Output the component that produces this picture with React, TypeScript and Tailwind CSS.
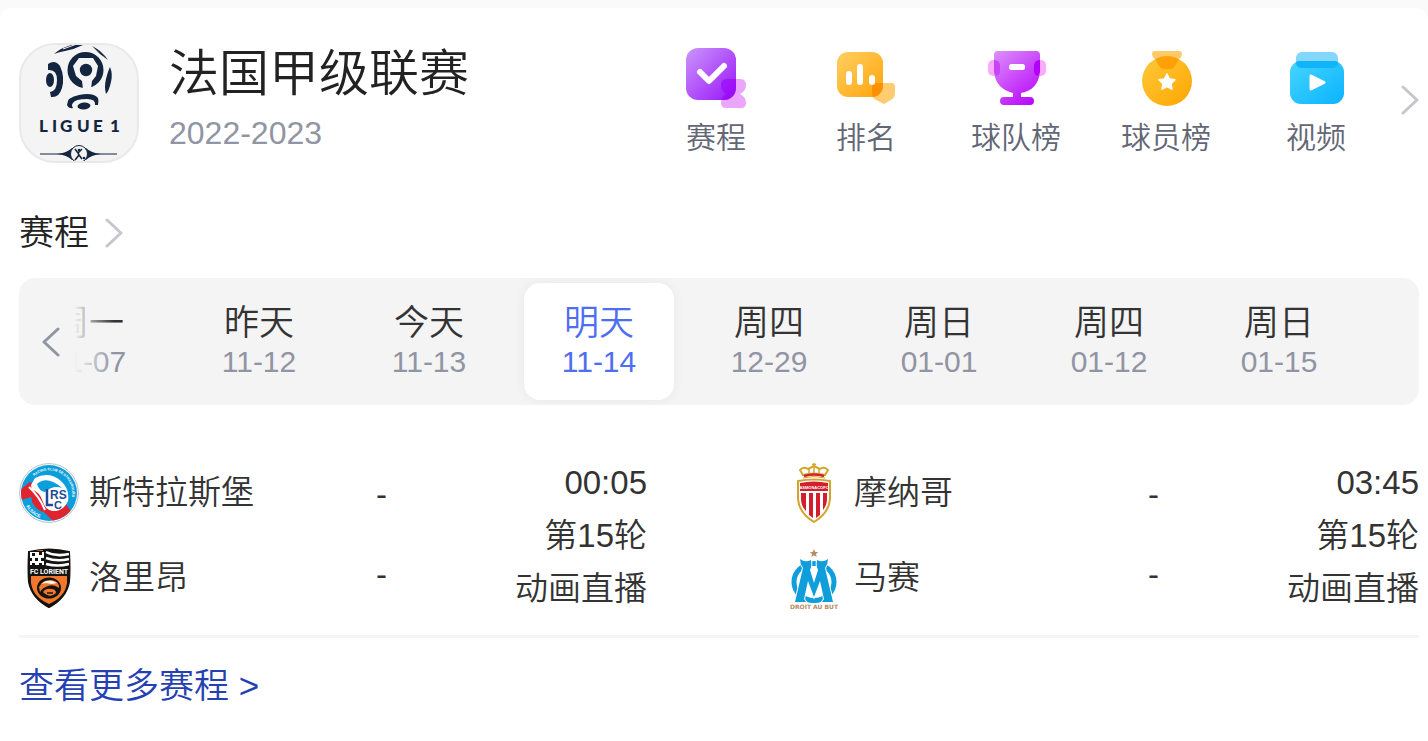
import { ReactNode } from "react";
import clsx from "clsx";

const Chevron = ({ className, flip = false }: { className?: string; flip?: boolean }) => (
  <svg viewBox="0 0 18 30" className={clsx("h-[30px] w-[18px]", className)} fill="none" aria-hidden="true">
    <path
      d={flip ? "M16 2 2 15 16 28" : "M2 2 16 15 2 28"}
      stroke="currentColor"
      strokeWidth="3"
      strokeLinecap="round"
      strokeLinejoin="round"
    />
  </svg>
);

const LeagueLogo = () => (
  <svg viewBox="2 2 116 116" className="size-full overflow-visible" fill="#14263f" role="img" aria-label="Ligue 1">
    <path d="M35 11Q45 2 63 0L64 2Q56 6 46 8Q40 9 35 11Z" />
    <path d="M44 6 58 1" stroke="#f4f4f4" strokeWidth="1" />
    <path d="M73 3Q83 8 89 17Q80 11 73 3Z" />
    <circle cx="66.500" cy="27" r="18" />
    <path d="M60 15 74 15 79 23 77 33 73 38 72 46 64 46 63 38 57 33 54 23Z" fill="#f4f4f4" />
    <circle cx="67" cy="27" r="6.200" />
    <path d="M29 21Q36 16 41 23Q46 34 43 45Q40 55 32 54L31 49Q38 48 38 37Q38 26 29 27Z" />
    <ellipse cx="31" cy="37" rx="4" ry="7" />
    <path d="M91 24Q94 31 92 39Q90 48 87 51Q85 44 87 36Q89 28 91 24Z" />
    <path d="M48 62Q48 54 60 52Q74 49 79 55Q80 58 79 62L76 62Q77 56 68 56Q56 56 54 60Q52 62 54 65Q50 66 48 62Z" />
    <ellipse cx="65" cy="63" rx="6.500" ry="3.400" transform="rotate(-6 65 63)" />
    <text x="20 33 41 58 74 85 91" y="89" fontSize="17" fontWeight="900" fontFamily="Lato, sans-serif">
      LIGUE 1
    </text>
    <path d="M21 111H98" stroke="#14263f" strokeWidth="1" />
    <path d="M38 111Q48 110 53 105H67Q72 110 82 111Q72 112 67 117H53Q48 112 38 111Z" />
    <circle cx="60" cy="111" r="8.500" fill="#f4f4f4" stroke="#14263f" />
    <path d="M56 106 59 110 63 106M59 109 60 113M60 112 56 117M60 112 63 116" stroke="#14263f" strokeWidth="1.600" fill="none" />
    <circle cx="60" cy="107" r="1.300" />
    <circle cx="65" cy="115" r="1.300" />
  </svg>
);

const ScheduleIcon = () => (
  <svg viewBox="0 0 60 60" className="size-[60px]" aria-hidden="true">
    <defs>
      <linearGradient id="schedule" x1="0" y1="0" x2="1" y2="1">
        <stop stopColor="#cb96fb" />
        <stop offset="1" stopColor="#9914f8" />
      </linearGradient>
      <clipPath id="schedule-clip">
        <rect width="50" height="52" rx="12" />
      </clipPath>
    </defs>
    <path d="M41 31h13q6 0 6 6t-6 9q6 3 6 9 0 5-5 5H40q-5 0-5-5 0-6 5-9-5-3-5-9 0-6 6-6Z" fill="#eba5fb" />
    <rect width="50" height="52" rx="12" fill="url(#schedule)" />
    <path
      d="M41 31h13q6 0 6 6t-6 9q6 3 6 9 0 5-5 5H40q-5 0-5-5 0-6 5-9-5-3-5-9 0-6 6-6Z"
      fill="#9b00f8"
      opacity=".6"
      clipPath="url(#schedule-clip)"
    />
    <path d="M14 24 23 33 38 18" fill="none" stroke="#fff" strokeWidth="6" strokeLinecap="round" strokeLinejoin="round" />
  </svg>
);

const RankIcon = () => (
  <svg viewBox="0 0 60 60" className="size-[60px]" aria-hidden="true">
    <defs>
      <linearGradient id="rank" x1="0" y1="0" x2="1" y2="1">
        <stop stopColor="#ffcf62" />
        <stop offset="1" stopColor="#ffa50a" />
      </linearGradient>
      <clipPath id="rank-clip">
        <rect x="1" y="4" width="46" height="45" rx="11" />
      </clipPath>
    </defs>
    <path d="M39 35H56q3 0 3 4v6q0 5-4 7l-7 4-8-4q-4-2-4-7v-7q0-3 3-3Z" fill="#ffcd70" />
    <rect x="1" y="4" width="46" height="45" rx="11" fill="url(#rank)" />
    <path
      d="M39 35H56q3 0 3 4v6q0 5-4 7l-7 4-8-4q-4-2-4-7v-7q0-3 3-3Z"
      fill="#ff8a00"
      opacity=".8"
      clipPath="url(#rank-clip)"
    />
    <path d="M13 26v8M24 19v15M36 30v4" stroke="#fff" strokeWidth="6" strokeLinecap="round" />
  </svg>
);

const TrophyIcon = () => (
  <svg viewBox="0 0 60 60" className="size-[60px]" aria-hidden="true">
    <defs>
      <linearGradient id="trophy" gradientUnits="userSpaceOnUse" x1="8" y1="3" x2="52" y2="56">
        <stop stopColor="#dc90fb" />
        <stop offset="1" stopColor="#b800fa" />
      </linearGradient>
    </defs>
    <rect x="2" y="12" width="12" height="16" rx="5" fill="#fbabfb" />
    <rect x="48" y="12" width="12" height="16" rx="5" fill="#fbabfb" />
    <path
      d="M12 3H50q4 0 4 4V24Q52 42 35 45v4h9q4 0 4 4t-4 4H18q-4 0-4-4t4-4h9V45Q10 41 8 24V7q0-4 4-4Z"
      fill="url(#trophy)"
    />
    <path d="M8 12q6 0 6 6v5q0 4-4 5l-2-4Z" fill="#c743f4" />
    <path d="M54 12q-6 0-6 6v5q0 4 4 5l2-4Z" fill="#b100f5" />
    <rect x="23" y="16" width="16" height="6" rx="2.500" fill="#fff" />
  </svg>
);

const MedalIcon = () => (
  <svg viewBox="0 0 60 60" className="size-[60px]" aria-hidden="true">
    <defs>
      <linearGradient id="medal" x1="0" y1="0" x2="1" y2="1">
        <stop stopColor="#ffc93c" />
        <stop offset="1" stopColor="#ffa600" />
      </linearGradient>
      <clipPath id="medal-clip">
        <circle cx="31" cy="33" r="25" />
      </clipPath>
    </defs>
    <path d="M19 3H43q3 0 3 3 0 3-3 5l-4 7q-2 3-4 3h-8q-2 0-4-3l-4-7q-3-2-3-5 0-3 3-3Z" fill="#ffcb69" />
    <circle cx="31" cy="33" r="25" fill="url(#medal)" />
    <path
      d="M19 3H43q3 0 3 3 0 3-3 5l-4 7q-2 3-4 3h-8q-2 0-4-3l-4-7q-3-2-3-5 0-3 3-3Z"
      fill="#ff9800"
      opacity=".8"
      clipPath="url(#medal-clip)"
    />
    <path
      d="m31 26 2.500 5 5.500.8-4 3.900 1 5.500-5-2.600-5 2.600 1-5.500-4-3.900 5.500-.8Z"
      fill="#fff"
      stroke="#fff"
      strokeWidth="1.500"
      strokeLinejoin="round"
    />
  </svg>
);

const VideoIcon = () => (
  <svg viewBox="0 0 60 60" className="size-[60px]" aria-hidden="true">
    <defs>
      <linearGradient id="video" x1="0" y1="0" x2="1" y2="1">
        <stop stopColor="#46d5fe" />
        <stop offset="1" stopColor="#0ab3ff" />
      </linearGradient>
    </defs>
    <rect x="10" y="4" width="42" height="16" rx="6" fill="#82d7fb" />
    <rect x="4" y="13" width="54" height="43" rx="11" fill="url(#video)" />
    <path d="M10 14q2-1 4-1H48q2 0 4 1v0q0 6-6 6H16q-6 0-6-6Z" fill="#10b4f8" />
    <path d="M25 28v13l13-6.500Z" fill="#fff" stroke="#fff" strokeWidth="3" strokeLinejoin="round" />
  </svg>
);

const StrasbourgLogo = () => (
  <svg viewBox="0 0 60 60" className="size-[60px]" aria-hidden="true">
    <defs>
      <clipPath id="rcs-clip">
        <circle cx="30" cy="30" r="28" />
      </clipPath>
      <path id="rcs-top" d="M15 13A23 23 0 0 1 51 40" />
      <path id="rcs-bottom" d="M7 43Q13 53 24 56" />
    </defs>
    <circle cx="30" cy="30" r="29.400" fill="#fff" stroke="#9db3c0" strokeWidth=".8" />
    <circle cx="30" cy="30" r="28" fill="#0c9ddb" />
    <g clipPath="url(#rcs-clip)">
      <path d="M11 19 0 28v10l12-4 12 14 12 12h8L52 48 46 40Z" fill="#e0242f" />
      <path d="M16 15Q30 8 42 18 51 26 49 38 44 49 33 48 22 46 20 36 12 30 12 22Z" fill="#fff" />
      <path d="M18 21Q28 12 43 25 34 22 26 29 20 28 18 21Z" fill="#0c9ddb" />
      <path d="M12 26Q21 29 24 39 26 46 34 49 20 52 13 39Z" fill="#e0242f" />
      <path d="M10 24Q20 33 26 47" fill="none" stroke="#fff" strokeWidth="2" />
      <path d="M28 26V42H34" fill="none" stroke="#1e4b95" strokeWidth="2.500" />
    </g>
    <g fill="#1e4b95" fontFamily="Liberation Sans, sans-serif" fontWeight="700">
      <text x="31" y="36" fontSize="12">
        RS
      </text>
      <text x="35" y="46" fontSize="11">
        C
      </text>
    </g>
    <g fill="#fff" fontFamily="Liberation Sans, sans-serif" fontWeight="700" fontSize="3.500">
      <text>
        <textPath href="#rcs-top">RACING CLUB DE STRASBOURG</textPath>
      </text>
      <text fontSize="4.500">
        <textPath href="#rcs-bottom">ALSACE</textPath>
      </text>
    </g>
  </svg>
);

const LorientLogo = () => (
  <svg viewBox="0 0 60 60" className="size-[60px]" aria-hidden="true">
    <defs>
      <clipPath id="fcl-clip">
        <path d="M10 4Q30-1 50 4 51 22 50 34 47 50 30 59 13 50 10 34 9 22 10 4Z" />
      </clipPath>
    </defs>
    <path d="M10 4Q30-1 50 4 51 22 50 34 47 50 30 59 13 50 10 34 9 22 10 4Z" fill="#151311" stroke="#151311" strokeWidth="2" />
    <g clipPath="url(#fcl-clip)">
      <path d="M11 4h14v13H11Z" fill="#fff" />
      <path d="M13 5h3v3h-3zM20 4h3v3h-3zM11 10h2v3h-2zM16 10h3v3h-3zM22 10h3v3h-3zM13 15h3v3h-3zM20 15h3v3h-3z" fill="#151311" />
      <path d="M16 2h8" stroke="#f1782b" strokeWidth="2" />
      <path d="M27 4Q37 9 50 6M27 10Q38 14 50 11M27 16Q39 19 50 16" stroke="#fff" strokeWidth="2.500" fill="none" />
      <path d="M12 28H48V35Q46 49 30 56 14 49 12 35Z" fill="#f1782b" />
      <ellipse cx="30" cy="40" rx="12" ry="10.500" fill="#151311" />
      <path d="M20 39Q24 31 33 32 41 34 40 40 35 36 29 38 23 40 21 44Z" fill="#f1782b" />
      <path d="M22 36Q29 30 38 35L33 36 27 35Z" fill="#fff" />
      <path d="M24 44Q27 40 32 41 37 41 37 45 31 51 24 44Z" fill="#f1782b" />
      <path d="M28 45h6" stroke="#151311" strokeWidth="1.500" />
    </g>
    <text x="30" y="26" textAnchor="middle" fill="#fff" fontSize="7" fontWeight="700" fontFamily="Roboto, sans-serif">
      FC LORIENT
    </text>
  </svg>
);

const MonacoLogo = () => (
  <svg viewBox="0 0 60 60" className="size-[60px]" aria-hidden="true">
    <path d="M19 12 16 7Q19 3 24 6L30 3 36 6Q41 3 44 7L41 12Q30 9 19 12Z" fill="none" stroke="#d5a52b" strokeWidth="2" />
    <path d="M25 6v5M30 4v6M35 6v5" stroke="#d5a52b" strokeWidth="1.500" />
    <path d="M20 13Q30 10 40 13" stroke="#d31f2d" strokeWidth="2.500" fill="none" />
    <path d="M19 15Q30 12 41 15" stroke="#d5a52b" strokeWidth="1" fill="none" />
    <path d="M30 0v4M28 1.500h4" stroke="#d5a52b" strokeWidth="1.300" />
    <path d="M14 18Q30 15 46 18V36Q45 50 30 59 15 50 14 36Z" fill="#fff" stroke="#d5a52b" strokeWidth="2" />
    <path d="M16 20Q30 17 44 20V28H16Z" fill="#d31f2d" />
    <path d="M17 30h5V48Q17 43 17 36ZM25 30h4V55l-4-3ZM32 30h4V52l-4 3ZM39 30h4v6q0 6-4 11Z" fill="#d31f2d" />
    <text x="30" y="26" textAnchor="middle" fill="#fff" fontSize="4" fontWeight="700" fontFamily="Liberation Sans, sans-serif">
      ASMONACOFC
    </text>
  </svg>
);

const MarseilleLogo = () => (
  <svg viewBox="0 0 60 60" className="size-[60px] overflow-visible" aria-hidden="true">
    <path d="m30 1 1.200 3h3l-2.300 2 .9 3-2.800-1.800L27.200 9l.9-3-2.300-2h3Z" fill="#b58b62" />
    <ellipse cx="30" cy="34" rx="20" ry="18.500" fill="none" stroke="#109ddb" strokeWidth="5" />
    <path
      d="M16 11Q21 15 27 12 28 18 26 22L30 35 34 22Q32 18 33 12 39 15 44 11 44 16 41 20L49 54H38L40 51 36 33 30 49 24 33 20 51 22 54H11L19 20Q16 16 16 11Z"
      fill="#109ddb"
      stroke="#fff"
      strokeWidth="2"
      paintOrder="stroke"
    />
    <text x="30" y="61" textAnchor="middle" fill="#b58b62" fontSize="6" fontWeight="700" fontFamily="DejaVu Sans, sans-serif">
      DROIT AU BUT
    </text>
  </svg>
);

const navItems = [
  { label: "赛程", icon: <ScheduleIcon /> },
  { label: "排名", icon: <RankIcon /> },
  { label: "球队榜", icon: <TrophyIcon /> },
  { label: "球员榜", icon: <MedalIcon /> },
  { label: "视频", icon: <VideoIcon /> },
];

const days = [
  { label: "周一", date: "11-07" },
  { label: "昨天", date: "11-12" },
  { label: "今天", date: "11-13" },
  { label: "明天", date: "11-14", active: true },
  { label: "周四", date: "12-29" },
  { label: "周日", date: "01-01" },
  { label: "周四", date: "01-12" },
  { label: "周日", date: "01-15" },
];

type Team = { name: string; logo: ReactNode };
type MatchData = { time: string; round: string; live: string; teams: Team[] };

const matches: MatchData[] = [
  {
    time: "00:05",
    round: "第15轮",
    live: "动画直播",
    teams: [
      { name: "斯特拉斯堡", logo: <StrasbourgLogo /> },
      { name: "洛里昂", logo: <LorientLogo /> },
    ],
  },
  {
    time: "03:45",
    round: "第15轮",
    live: "动画直播",
    teams: [
      { name: "摩纳哥", logo: <MonacoLogo /> },
      { name: "马赛", logo: <MarseilleLogo /> },
    ],
  },
];

const Match = ({ match }: { match: MatchData }) => (
  <a href="#match" className="flex items-center text-[33px] text-[#333]">
    <div className="flex-1">
      {match.teams.map((team) => (
        <div key={team.name} className="flex h-[85px] items-center gap-[10px]">
          {team.logo}
          <span>{team.name}</span>
        </div>
      ))}
    </div>
    <div className="leading-[80px]">
      {match.teams.map((team) => (
        <p key={team.name}>-</p>
      ))}
    </div>
    <div className="w-[260px] text-right leading-[53px]">
      <p>{match.time}</p>
      <p>{match.round}</p>
      <p>{match.live}</p>
    </div>
  </a>
);

export default function App() {
  return (
    <div className="bg-[#fafafa] pt-2 font-['Liberation_Sans','Noto_Sans_CJK_SC',sans-serif] font-[350] text-[#222]">
      <main className="rounded-t-xl bg-white pt-[35px] pr-[9px] pb-8 pl-[19px]">
        <header className="flex items-start">
          <div className="size-[120px] shrink-0 overflow-hidden rounded-[36px] border-2 border-[#e9e9e9] bg-[#f4f4f4]">
            <LeagueLogo />
          </div>
          <div className="ml-[30px] flex-1">
            <h1 className="text-[50px] leading-[62px]">法国甲级联赛</h1>
            <p className="text-[32px] leading-[56px] text-[#9195a3]">2022-2023</p>
          </div>
          <nav className="flex pt-[5px] pr-[10px]">
            {navItems.map((item) => (
              <a key={item.label} href="#nav" className="flex w-[150px] flex-col items-center">
                {item.icon}
                <span className="text-[30px] leading-[60px] text-[#626675]">{item.label}</span>
              </a>
            ))}
          </nav>
          <button type="button" aria-label="更多" className="mt-[42px] text-[#c4c7ce]">
            <Chevron />
          </button>
        </header>

        <h2 className="mt-[35px] text-[35px] leading-[60px]">
          <a href="#schedule" className="flex items-center gap-4">
            赛程
            <Chevron className="text-[#c4c7ce]" />
          </a>
        </h2>

        <section className="mt-[15px] flex items-center rounded-2xl bg-[#f4f4f4] pr-[55px]">
          <button type="button" aria-label="上一页" className="flex w-[55px] shrink-0 justify-end pr-[14px] text-[#9195a3]">
            <Chevron flip />
          </button>
          <div className="relative flex flex-1 justify-end overflow-hidden py-[5px]">
            {days.map((day) => (
              <button
                key={day.date}
                type="button"
                className={clsx(
                  "mx-[10px] flex h-[117px] w-[150px] shrink-0 flex-col items-center justify-center rounded-2xl",
                  day.active && "bg-white text-[#4e6ef2] shadow-[0_0_12px] shadow-black/5"
                )}
              >
                <span className={clsx("text-[35px] leading-10", !day.active && "text-[#333]")}>{day.label}</span>
                <span className={clsx("text-[30px] leading-[38px]", !day.active && "text-[#9195a3]")}>{day.date}</span>
              </button>
            ))}
            <div className="pointer-events-none absolute inset-y-0 left-0 w-10 bg-linear-to-r from-[#f4f4f4] to-[#f4f4f4]/0" />
          </div>
        </section>

        <section className="mt-[45px] grid grid-cols-[628fr_635fr] gap-x-[137px] border-b-3 border-[#f5f5f6] pb-[15px]">
          {matches.map((match) => (
            <Match key={match.teams[0].name} match={match} />
          ))}
        </section>

        <a href="#more" className="mt-[18px] inline-block text-[35px] leading-[60px] text-[#2440b3]">
          查看更多赛程 &gt;
        </a>
      </main>
    </div>
  );
}
